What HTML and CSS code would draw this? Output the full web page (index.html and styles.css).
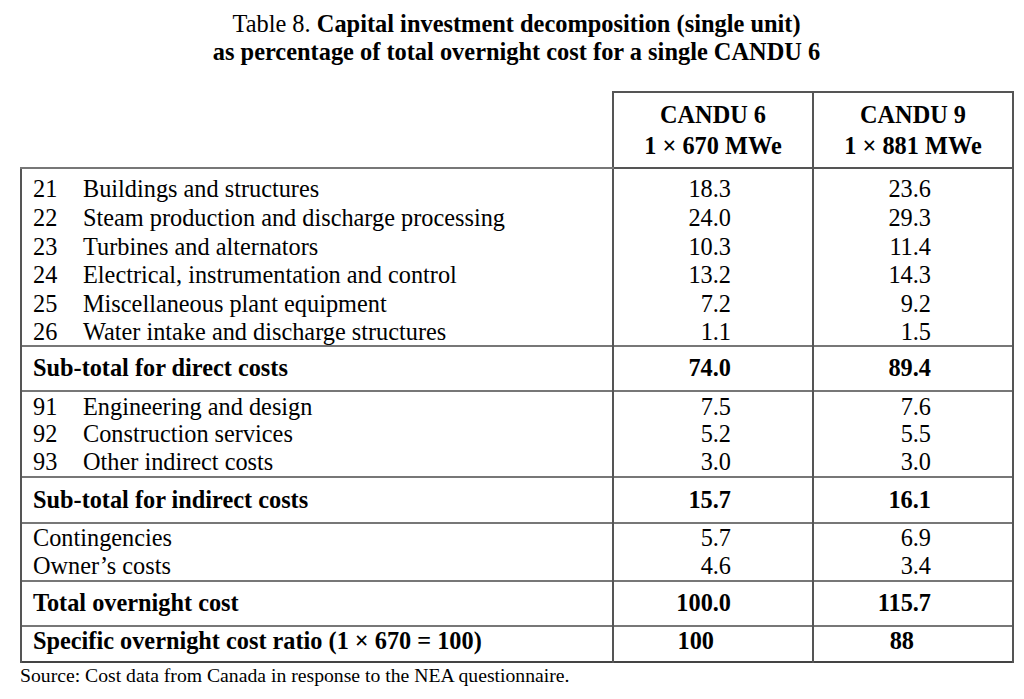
FILE: index.html
```html
<!DOCTYPE html>
<html lang="en">
<head>
<meta charset="utf-8">
<title>Table 8. Capital investment decomposition</title>
<link rel="stylesheet" href="styles.css">
</head>
<body>
<div class="caption">
  <div>Table 8. <b>Capital investment decomposition (single unit)</b></div>
  <div><b>as percentage of total overnight cost for a single CANDU 6</b></div>
</div>
<table class="cost">
  <colgroup>
    <col class="c-label">
    <col class="c-val">
    <col class="c-val">
  </colgroup>
  <thead>
    <tr>
      <th class="blank"></th>
      <th>CANDU 6<br>1 × 670 MWe</th>
      <th>CANDU 9<br>1 × 881 MWe</th>
    </tr>
  </thead>
  <tbody class="group g-direct">
    <tr><td><span class="code">21</span>Buildings and structures</td><td class="num">18.3</td><td class="num">23.6</td></tr>
    <tr><td><span class="code">22</span>Steam production and discharge processing</td><td class="num">24.0</td><td class="num">29.3</td></tr>
    <tr><td><span class="code">23</span>Turbines and alternators</td><td class="num">10.3</td><td class="num">11.4</td></tr>
    <tr><td><span class="code">24</span>Electrical, instrumentation and control</td><td class="num">13.2</td><td class="num">14.3</td></tr>
    <tr><td><span class="code">25</span>Miscellaneous plant equipment</td><td class="num">7.2</td><td class="num">9.2</td></tr>
    <tr><td><span class="code">26</span>Water intake and discharge structures</td><td class="num">1.1</td><td class="num">1.5</td></tr>
  </tbody>
  <tbody class="total t-direct">
    <tr><td>Sub-total for direct costs</td><td class="num">74.0</td><td class="num">89.4</td></tr>
  </tbody>
  <tbody class="group g-indirect">
    <tr><td><span class="code">91</span>Engineering and design</td><td class="num">7.5</td><td class="num">7.6</td></tr>
    <tr><td><span class="code">92</span>Construction services</td><td class="num">5.2</td><td class="num">5.5</td></tr>
    <tr><td><span class="code">93</span>Other indirect costs</td><td class="num">3.0</td><td class="num">3.0</td></tr>
  </tbody>
  <tbody class="total t-indirect">
    <tr><td>Sub-total for indirect costs</td><td class="num">15.7</td><td class="num">16.1</td></tr>
  </tbody>
  <tbody class="group g-other">
    <tr><td>Contingencies</td><td class="num">5.7</td><td class="num">6.9</td></tr>
    <tr><td>Owner’s costs</td><td class="num">4.6</td><td class="num">3.4</td></tr>
  </tbody>
  <tbody class="total t-overnight">
    <tr><td>Total overnight cost</td><td class="num">100.0</td><td class="num">115.7</td></tr>
  </tbody>
  <tbody class="total t-ratio">
    <tr><td>Specific overnight cost ratio (1 × 670 = 100)</td><td class="num short">100</td><td class="num short">88</td></tr>
  </tbody>
</table>
<p class="source">Source: Cost data from Canada in response to the NEA questionnaire.</p>
</body>
</html>
```

FILE: styles.css
```css
html, body {
  margin: 0;
  padding: 0;
  background: #ffffff;
}

body {
  font-family: "Liberation Serif", "Times New Roman", serif;
  color: #000000;
  width: 1024px;
}

.caption {
  width: 993px;
  margin-left: 20px;
  padding-top: 10px;
  text-align: center;
  font-size: 24.4px;
  line-height: 28px;
}

.caption b {
  font-weight: bold;
}

.cost {
  margin: 25px 0 0 20px;
  border-collapse: collapse;
  table-layout: fixed;
  width: 993px;
  font-size: 24.3px;
  line-height: 28.8px;
}

.c-label { width: 592px; }
.c-val { width: 200px; }

.cost th {
  font-weight: bold;
  line-height: 31px;
  padding: 6px 0 6px 0;
  text-align: center;
  border: 2px solid #555555;
}

.cost th.blank {
  border-top: none;
  border-left: none;
  border-right: 2px solid #555555;
  border-bottom: 2px solid #777777;
}

.cost td {
  padding: 0 0 0 11px;
  border-left: 2px solid #555555;
  border-right: 2px solid #555555;
  white-space: nowrap;
  vertical-align: baseline;
}

.cost tbody {
  border-top: 2px solid #777777;
}

.cost tbody.t-ratio {
  border-bottom: 2px solid #444444;
}

.cost td.num {
  text-align: right;
  padding: 0 81px 0 0;
}

.cost td.num.short {
  padding-right: 98px;
}

.code {
  display: inline-block;
  width: 50px;
}

.total td {
  font-weight: bold;
}

/* vertical rhythm of the groups */
.g-direct tr:first-child td { padding-top: 6px; }
.g-direct tr:last-child td { line-height: 24.8px; padding-top: 1px; }

.t-direct td { padding-top: 7px; padding-bottom: 7px; }

.g-indirect td { line-height: 28.3px; }
.g-indirect tr:first-child td { padding-top: 1px; line-height: 27.3px; }

.t-indirect td { padding-top: 8px; padding-bottom: 7px; }

.g-other td { line-height: 28px; }

.t-overnight td { padding-top: 7px; padding-bottom: 7px; }

.t-ratio td { padding-top: 0; padding-bottom: 5px; }

.source {
  margin: 0 0 0 20px;
  font-size: 19.7px;
  line-height: 24px;
}
```
